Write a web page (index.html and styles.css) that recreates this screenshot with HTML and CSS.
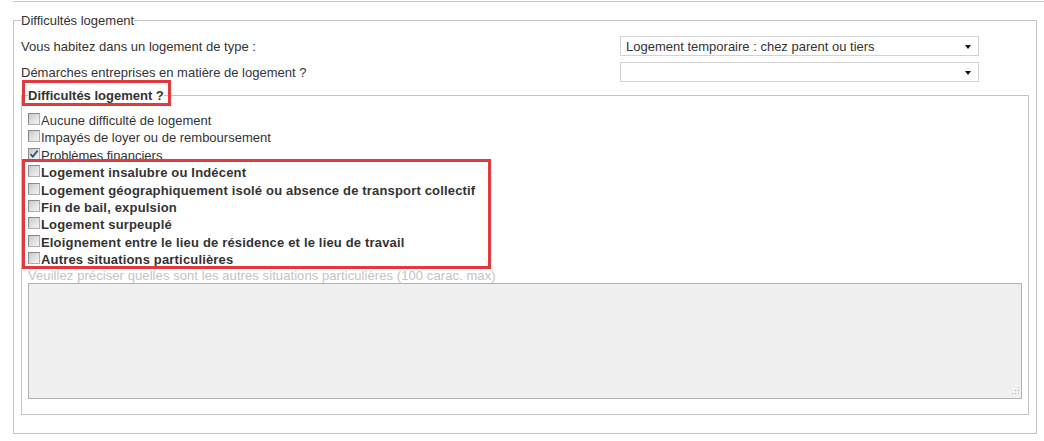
FILE: index.html
```html
<!DOCTYPE html>
<html lang="fr">
<head>
<meta charset="utf-8">
<title>Difficultés logement</title>
<link rel="stylesheet" href="styles.css">
</head>
<body>
<div class="page">
  <div class="prev-rule"></div>
  <fieldset class="outer">
    <legend class="outer-legend">Difficultés logement</legend>
    <div class="field-row">
      <label class="field-label">Vous habitez dans un logement de type :</label>
      <div class="select"><span class="select-value">Logement temporaire : chez parent ou tiers</span><span class="select-arrow"></span></div>
    </div>
    <div class="field-row">
      <label class="field-label">Démarches entreprises en matière de logement ?</label>
      <div class="select"><span class="select-value"></span><span class="select-arrow"></span></div>
    </div>
    <fieldset class="inner">
      <legend class="inner-legend">Difficultés logement ?</legend>
      <div class="choices">
        <label class="choice"><span class="box"></span>Aucune difficulté de logement</label>
        <label class="choice"><span class="box"></span>Impayés de loyer ou de remboursement</label>
        <label class="choice"><span class="box"><svg class="tick" width="10" height="10" viewBox="0 0 10 10"><path d="M1.5 5 L3.8 7.6 L8.6 1.6" fill="none" stroke="#2c4f8c" stroke-width="1.7"/></svg></span>Problèmes financiers</label>
        <label class="choice choice-strong"><span class="box"></span>Logement insalubre ou Indécent</label>
        <label class="choice choice-strong"><span class="box"></span>Logement géographiquement isolé ou absence de transport collectif</label>
        <label class="choice choice-strong"><span class="box"></span>Fin de bail, expulsion</label>
        <label class="choice choice-strong"><span class="box"></span>Logement surpeuplé</label>
        <label class="choice choice-strong"><span class="box"></span>Eloignement entre le lieu de résidence et le lieu de travail</label>
        <label class="choice choice-strong"><span class="box"></span>Autres situations particulières</label>
      </div>
      <div class="hint">Veuillez préciser quelles sont les autres situations particulières (100 carac. max)</div>
      <div class="textarea">
        <svg class="grip" width="9" height="9" viewBox="0 0 9 9">
          <rect x="7" y="0" width="1" height="1" fill="#b5b5b5"/>
          <rect x="4" y="3" width="1" height="1" fill="#b5b5b5"/>
          <rect x="7" y="3" width="1" height="1" fill="#b5b5b5"/>
          <rect x="1" y="6" width="1" height="1" fill="#b5b5b5"/>
          <rect x="4" y="6" width="1" height="1" fill="#b5b5b5"/>
          <rect x="7" y="6" width="1" height="1" fill="#b5b5b5"/>
        </svg>
      </div>
    </fieldset>
  </fieldset>
  <div class="mark mark-legend"></div>
  <div class="mark mark-list"></div>
</div>
</body>
</html>
```
FILE: styles.css
```css
html, body {
  margin: 0;
  padding: 0;
  background: #ffffff;
}

body {
  font-family: "Liberation Sans", Arial, sans-serif;
  font-size: 13px;
  color: #333333;
}

.page {
  position: relative;
  width: 1044px;
  height: 441px;
  overflow: hidden;
}

.prev-rule {
  margin: 1px 0 0 13px;
  border-top: 1px solid #c8c8c8;
}

.outer {
  box-sizing: border-box;
  width: 1024px;
  min-width: 0;
  margin: 11px 0 0 13px;
  padding: 8px 7px 18px 7px;
  border: 1px solid #c4c4c4;
}

.outer-legend {
  padding: 0;
  line-height: 15px;
  color: #333333;
}

.field-row {
  display: grid;
  grid-template-columns: 599px 359px;
  align-items: center;
  height: 20px;
  margin-bottom: 6px;
}

.field-row:last-of-type {
  margin-bottom: 0;
}

.field-label {
  line-height: 15px;
}

.select {
  box-sizing: border-box;
  height: 20px;
  display: flex;
  align-items: center;
  justify-content: space-between;
  padding: 0 7px 0 5px;
  border: 1px solid #d3d3d3;
  background: #ffffff;
  color: #333333;
}

.select-arrow {
  width: 0;
  height: 0;
  border-left: 3.5px solid transparent;
  border-right: 3.5px solid transparent;
  border-top: 4px solid #111111;
  margin-top: 1px;
}

.inner {
  min-width: 0;
  margin: 6px 0 0 0;
  padding: 9px 6px 15px 6px;
  border: 1px solid #c4c4c4;
}

.inner-legend {
  padding: 0;
  font-weight: bold;
  line-height: 15px;
  color: #333333;
}

.choices {
  display: flex;
  flex-direction: column;
}

.choice {
  display: flex;
  align-items: flex-start;
  height: 17.4px;
  line-height: 17.4px;
  color: #333333;
}

.choice-strong {
  font-weight: bold;
  letter-spacing: 0.17px;
}

.box {
  box-sizing: border-box;
  flex: none;
  width: 12px;
  height: 12px;
  margin: 1px 1px 0 0;
  border: 1px solid #8a8a8a;
  border-right-color: #b0b0b0;
  border-bottom-color: #b0b0b0;
  background: linear-gradient(135deg, #c8c8c8 0%, #e2e2e2 55%, #f4f4f4 100%);
  display: flex;
  align-items: center;
  justify-content: center;
}

.tick {
  display: block;
}

.hint {
  line-height: 14px;
  letter-spacing: 0.08px;
  color: #c4c4c4;
}

.textarea {
  position: relative;
  box-sizing: border-box;
  height: 116px;
  border: 1px solid #b2b2b2;
  background: #f0f0f0;
}

.grip {
  position: absolute;
  right: 1px;
  bottom: 2px;
  display: block;
}

.mark {
  position: absolute;
  box-sizing: border-box;
  border: 3px solid #e2393f;
}

.mark-legend {
  left: 22px;
  top: 80px;
  width: 149px;
  height: 26px;
}

.mark-list {
  left: 22px;
  top: 159px;
  width: 469px;
  height: 110px;
}
```
